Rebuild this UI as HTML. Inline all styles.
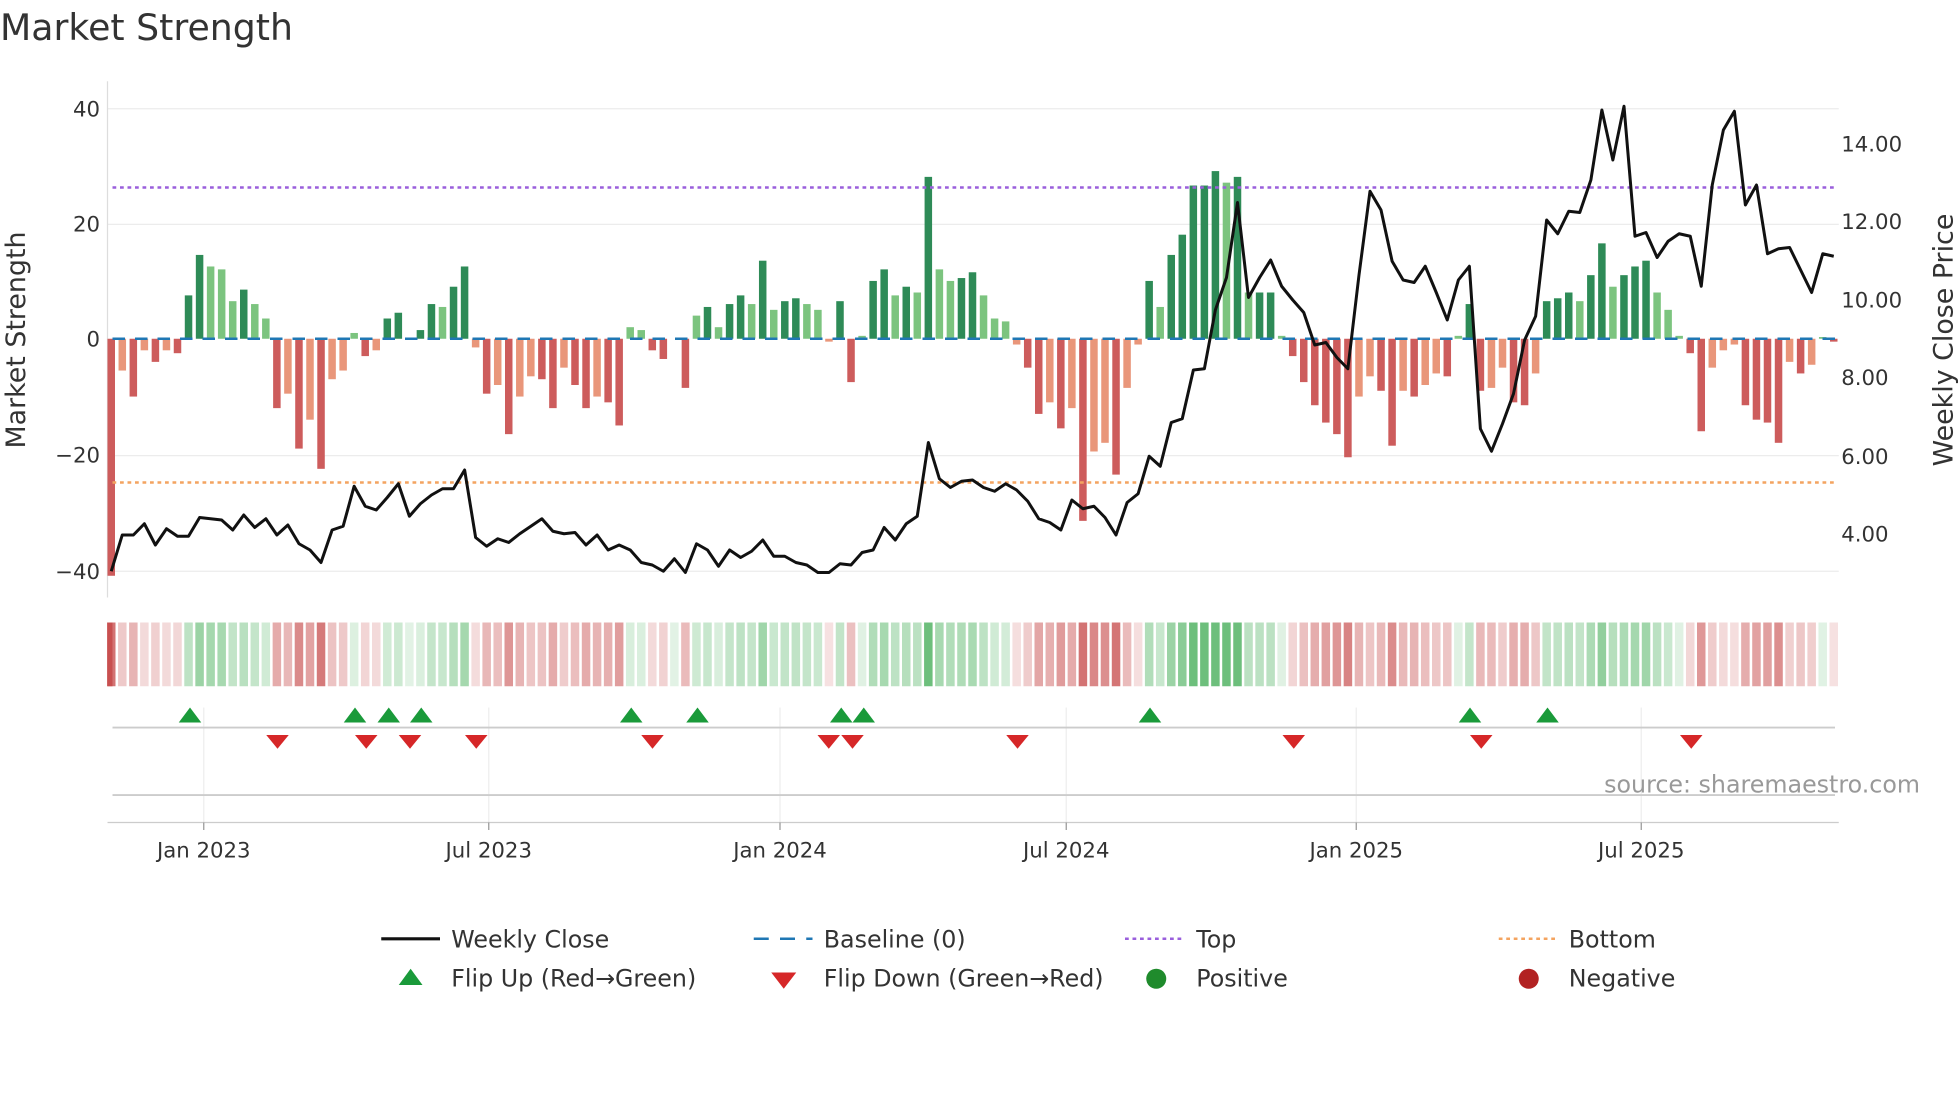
<!DOCTYPE html>
<html><head><meta charset="utf-8"><style>
html,body{margin:0;padding:0;background:#fff;width:1960px;height:1102px;overflow:hidden}
svg{display:block}
text{font-family:"DejaVu Sans","Liberation Sans",sans-serif;fill:#333}
</style></head><body>
<svg id="s" width="1960" height="1102" viewBox="0 0 1568 881.6" xmlns="http://www.w3.org/2000/svg">
<text x="0" y="32" font-size="29">Market Strength</text>
<g stroke="#ececec" stroke-width="1">
<line x1="86" x2="1471" y1="87" y2="87"/><line x1="86" x2="1471" y1="179.5" y2="179.5"/><line x1="86" x2="1471" y1="364.5" y2="364.5"/><line x1="86" x2="1471" y1="457" y2="457"/>
</g>
<line x1="86" y1="65" x2="86" y2="478" stroke="#ddd"/>
<g font-size="17" text-anchor="end">
<text x="80" y="93">40</text><text x="80" y="185">20</text><text x="80" y="277">0</text><text x="80" y="370">−20</text><text x="80" y="463">−40</text>
</g>
<g font-size="17">
<text x="1473" y="121">14.00</text><text x="1473" y="183">12.00</text><text x="1473" y="246">10.00</text><text x="1473" y="308">8.00</text><text x="1473" y="371">6.00</text><text x="1473" y="433">4.00</text>
</g>
<text transform="translate(20,272) rotate(-90)" font-size="21.5" text-anchor="middle">Market Strength</text>
<text transform="translate(1562,272) rotate(-90)" font-size="21.5" text-anchor="middle">Weekly Close Price</text>
<g id="bars"></g>
<line x1="90" x2="1468" y1="150" y2="150" stroke="#9a5fdc" stroke-width="2" stroke-dasharray="3,3"/>
<line x1="90" x2="1468" y1="386" y2="386" stroke="#f4a460" stroke-width="2" stroke-dasharray="3,3"/>
<line x1="90" x2="1468" y1="271" y2="271" stroke="#1f77b4" stroke-width="2" stroke-dasharray="10,8"/>
<polyline id="pl" fill="none" stroke="#111" stroke-width="2.4" stroke-linejoin="round"/>
<g id="heat"></g>
<g stroke="#eee"><line x1="163" x2="163" y1="566" y2="660"/><line x1="391" x2="391" y1="566" y2="660"/><line x1="624" x2="624" y1="566" y2="660"/><line x1="853" x2="853" y1="566" y2="660"/><line x1="1085" x2="1085" y1="566" y2="660"/><line x1="1313" x2="1313" y1="566" y2="660"/></g>
<line x1="90" x2="1468" y1="582" y2="582" stroke="#ccc" stroke-width="1.5"/>
<line x1="90" x2="1468" y1="636" y2="636" stroke="#ccc" stroke-width="1.5"/>
<line x1="86" x2="1471" y1="658" y2="658" stroke="#ccc" stroke-width="1"/>
<g id="tri"></g>
<g stroke="#999"><line x1="163" x2="163" y1="658" y2="664"/><line x1="391" x2="391" y1="658" y2="664"/><line x1="624" x2="624" y1="658" y2="664"/><line x1="853" x2="853" y1="658" y2="664"/><line x1="1085" x2="1085" y1="658" y2="664"/><line x1="1313" x2="1313" y1="658" y2="664"/></g>
<g font-size="17" text-anchor="middle">
<text x="163" y="686">Jan 2023</text><text x="391" y="686">Jul 2023</text><text x="624" y="686">Jan 2024</text><text x="853" y="686">Jul 2024</text><text x="1085" y="686">Jan 2025</text><text x="1313" y="686">Jul 2025</text>
</g>
<text x="1536" y="634" font-size="19" text-anchor="end" style="fill:#999">source: sharemaestro.com</text>
<g font-size="19">
<line x1="305" x2="352" y1="751" y2="751" stroke="#111" stroke-width="2.5"/><text x="361" y="758">Weekly Close</text>
<line x1="603" x2="650" y1="751" y2="751" stroke="#1f77b4" stroke-width="2" stroke-dasharray="12,9"/><text x="659" y="758">Baseline (0)</text>
<line x1="900" x2="947" y1="751" y2="751" stroke="#9a5fdc" stroke-width="2" stroke-dasharray="3,3"/><text x="957" y="758">Top</text>
<line x1="1199" x2="1246" y1="751" y2="751" stroke="#f4a460" stroke-width="2" stroke-dasharray="3,3"/><text x="1255" y="758">Bottom</text>
<polygon points="319,788 338,788 328.5,775" fill="#1a9a3a"/><text x="361" y="789">Flip Up (Red→Green)</text>
<polygon points="617,778 637,778 627,791" fill="#d62728"/><text x="659" y="789">Flip Down (Green→Red)</text>
<circle cx="925" cy="783" r="8" fill="#1f8b2c"/><text x="957" y="789">Positive</text>
<circle cx="1223" cy="783" r="8" fill="#b22222"/><text x="1255" y="789">Negative</text>
</g>
</svg>
<script>
var v=[-41,-5.5,-10,-2,-4,-2,-2.5,7.5,14.5,12.5,12,6.5,8.5,6,3.5,-12,-9.5,-19,-14,-22.5,-7,-5.5,1,-3,-2,3.5,4.5,0,1.5,6,5.5,9,12.5,-1.5,-9.5,-8,-16.5,-10,-6.5,-7,-12,-5,-8,-12,-10,-11,-15,2,1.5,-2,-3.5,0,-8.5,4,5.5,2,6,7.5,6,13.5,5,6.5,7,6,5,-0.5,6.5,-7.5,0.5,10,12,7.5,9,8,28,12,10,10.5,11.5,7.5,3.5,3,-1,-5,-13,-11,-15.5,-12,-31.5,-19.5,-18,-23.5,-8.5,-1,10,5.5,14.5,18,26.5,26.5,29,27,28,8,8,8,0.5,-3,-7.5,-11.5,-14.5,-16.5,-20.5,-10,-6.5,-9,-18.5,-9,-10,-8,-6,-6.5,0.5,6,-9,-8.5,-5,-11,-11.5,-6,6.5,7,8,6.5,11,16.5,9,11,12.5,13.5,8,5,0.5,-2.5,-16,-5,-2,-1,-11.5,-14,-14.5,-18,-4,-6,-4.5,0.3,-0.5];
var n=v.length,x0=89,dx=(1467-89)/(n-1),b='',h='';
for(var i=0;i<n;i++){var x=x0+i*dx,a=v[i],p=i?v[i-1]:0,dark=Math.abs(a)>=Math.abs(p);
var c=a>=0?(dark?'#2e8b57':'#7cc47f'):(dark?'#cd5c5c':'#e9967a');
var hh=Math.abs(a)*4.625,y=a>=0?271-hh:271;
if(hh>0.3)b+='<rect x="'+(x-3)+'" y="'+y+'" width="6" height="'+hh+'" fill="'+c+'"/>';
var op=Math.min(1,0.2+Math.abs(a)/30);
var hc=a>=0?'rgba(60,170,80,'+op*0.75+')':'rgba(200,80,80,'+op*0.8+')';
h+='<rect x="'+(x-3.4)+'" y="498" width="6.8" height="51" fill="'+hc+'"/>';}
document.getElementById('bars').innerHTML=b;
document.getElementById('heat').innerHTML='<rect x="86" y="498" width="4" height="51" fill="rgba(200,80,80,1)"/>'+h;
var pts=[457,428,428,419,436,423,429,429,414,415,416,424,412,422,415,428,420,435,440,450,424,421,389,405,408,398,387,413,403,396,391,391,376,430,437,431,434,427,421,415,425,427,426,436,428,440,436,440,450,452,457,447,458,435,440,453,440,446,441,432,445,445,450,452,458,458,451,452,442,440,422,432,419,413,354,383,390,385,384,390,393,387,392,401,415,418,424,400,407,405,414,428,402,395,365,373,338,335,296,295,248,222,162,238,222,208,229,240,250,276,274,286,295,220,153,168,209,224,226,213,234,256,224,213,343,361,339,315,272,253,176,187,169,170,144,88,128,85,189,186,206,193,187,189,229,148,104,89,164,148,203,199,198,216,234,203,205];
var m=pts.length,dp=(1467-89)/(m-1),s='';for(var j=0;j<m;j++)s+=(89+j*dp).toFixed(1)+','+pts[j]+' ';
document.getElementById('pl').setAttribute('points',s);
var up=[152,284,311,337,505,558,673,691,920,1176,1238],dn=[222,293,328,381,522,663,682,814,1035,1185,1353],t='';
up.forEach(function(x){t+='<polygon points="'+(x-9)+',578 '+(x+9)+',578 '+x+',566" fill="#1a9a3a"/>';});
dn.forEach(function(x){t+='<polygon points="'+(x-9)+',588 '+(x+9)+',588 '+x+',599" fill="#d62728"/>';});
document.getElementById('tri').innerHTML=t;
</script>
</body></html>
